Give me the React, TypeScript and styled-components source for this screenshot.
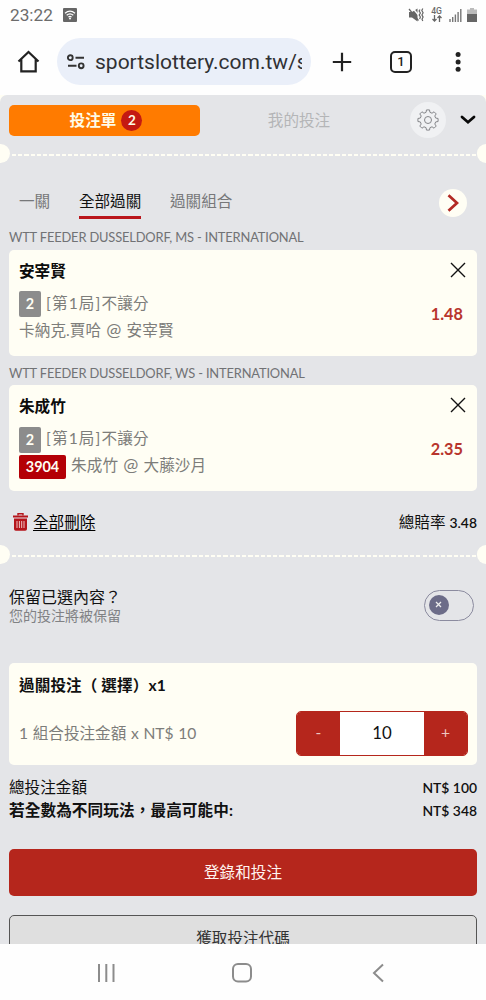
import React from 'react';
import styled, { createGlobalStyle } from 'styled-components';

const RED = '#b5261c';
const CREAM = '#fffef4';

const Global = createGlobalStyle`
  * { box-sizing: border-box; }
  body { margin: 0; background: #fefefe; }
  button { font: inherit; border: 0; padding: 0; background: none; }
`;

const Phone = styled.div`
  width: 486px;
  height: 1000px;
  display: flex;
  flex-direction: column;
  overflow: hidden;
  background: #fefefe;
  font-family: Lato, 'Noto Sans CJK TC', sans-serif;
  font-size: 15.6px;
  color: #111;
  white-space: nowrap;
`;

const StatusBar = styled.header`
  height: 30px;
  flex: none;
  display: flex;
  align-items: center;
  padding: 0 9px 0 10px;
  font: 17.2px/30px Roboto, sans-serif;
  color: #6c6c6c;
`;

const Clock = styled.span`
  width: 53px;
`;

const StatusIcons = styled.div`
  margin-left: auto;
  display: flex;
  align-items: center;
`;

const Network = styled.div`
  width: 13px;
  margin: 0 6px 0 6px;
  display: flex;
  flex-direction: column;
  align-items: center;
  font: 500 8.6px/7px Roboto, sans-serif;
`;

const BatteryIcon = styled.svg`
  margin-left: 5px;
`;

const BrowserBar = styled.div`
  height: 65px;
  flex: none;
  display: flex;
  align-items: center;
  padding: 0 0 2px 17px;
`;

const AddressBar = styled.div`
  width: 254px;
  height: 47px;
  margin: 0 21px 0 17px;
  padding: 0 9px 0 9px;
  border-radius: 24px;
  background: #eaeff9;
  display: flex;
  align-items: center;
`;

const Url = styled.span`
  margin-left: 9px;
  width: 207px;
  overflow: hidden;
  font: 21px/30px Roboto, sans-serif;
  color: #303134;
`;

const TabCount = styled.div`
  width: 22px;
  height: 22px;
  margin: 0 36px 0 38px;
  border: 2px solid #222;
  border-radius: 5px;
  display: flex;
  align-items: center;
  justify-content: center;
  font: 500 13px/18px Roboto, sans-serif;
  color: #222;
`;

const Backdrop = styled.main`
  height: 849px;
  flex: none;
  background: ${CREAM};
`;

const Sheet = styled.div`
  height: 849px;
  overflow: hidden;
  border-radius: 7px 7px 0 0;
  background: #e4e5e8;
`;

const SlipHeader = styled.div`
  height: 49px;
  display: flex;
  align-items: center;
  padding: 1px 9px 0;
`;

const SlipTab = styled.button<{ $active?: boolean }>`
  width: ${p => (p.$active ? 191 : 198)}px;
  height: 31px;
  padding: ${p => (p.$active ? '0 0 2px 3px' : '0 0 3px')};
  border-radius: 5px;
  display: flex;
  align-items: center;
  justify-content: center;
  gap: 5px;
  background: ${p => (p.$active ? '#ff7b00' : 'transparent')};
  color: ${p => (p.$active ? '#fffbe8' : '#b4b5b7')};
  font-weight: ${p => (p.$active ? 700 : 400)};
`;

const Count = styled.span`
  width: 21px;
  height: 21px;
  margin-top: 2px;
  border-radius: 50%;
  background: #c41a12;
  font-size: 13.5px;
  line-height: 21px;
  text-align: center;
`;

const RoundButton = styled.button<{ $size: number; $bg: string }>`
  width: ${p => p.$size}px;
  height: ${p => p.$size}px;
  flex: none;
  border-radius: 50%;
  background: ${p => p.$bg};
  display: flex;
  align-items: center;
  justify-content: center;
`;

const HeaderActions = styled.div`
  display: flex;
  align-items: center;
  gap: 14px;
  margin-left: 12px;
`;

const Perforation = styled.div`
  height: 19px;
  display: flex;
  align-items: center;
  justify-content: space-between;
`;

const Notch = styled.span<{ $right?: boolean }>`
  width: 9.5px;
  height: 19px;
  background: ${CREAM};
  border-radius: ${p => (p.$right ? '10px 0 0 10px' : '0 10px 10px 0')};
`;

const Dashes = styled.span`
  flex: 1;
  height: 2px;
  margin: 2px 0 0 2px;
  background: repeating-linear-gradient(90deg, ${CREAM} 0 4.2px, transparent 4.2px 6.22px);
`;

const ComboBar = styled.nav`
  height: 63px;
  display: flex;
  align-items: flex-end;
  padding: 0 19px 7px;
  gap: 28.7px;
`;

const ComboTab = styled.button<{ $active?: boolean }>`
  height: 33px;
  padding-top: 1px;
  line-height: 29px;
  border-bottom: 3px solid ${p => (p.$active ? '#b9151b' : 'transparent')};
  color: ${p => (p.$active ? '#111' : '#77787a')};
`;

const NextSlot = styled.div`
  margin: 0 0 2px auto;
`;

const League = styled.div<{ $top: number }>`
  height: ${p => p.$top + 23.5}px;
  padding: ${p => p.$top}px 9px 0;
  font-size: 12.9px;
  line-height: 22px;
  letter-spacing: -0.17px;
  color: #717275;
`;

const Card = styled.section<{ $height: number }>`
  height: ${p => p.$height}px;
  margin: 0 9px;
  border-radius: 5px;
  background: ${CREAM};
  padding: 0 10px;
`;

const PickTop = styled.div`
  height: 41px;
  padding-bottom: 1px;
  display: flex;
  align-items: center;
  justify-content: space-between;
  font-weight: 700;
  color: #0b0b0b;
`;

const PickBody = styled.div`
  display: flex;
  justify-content: space-between;
  color: #7d7d7a;
  padding-right: 4px;
`;

const PickLine = styled.div`
  height: 27px;
  display: flex;
  align-items: center;
  gap: 5px;
`;

const Period = styled.span`
  letter-spacing: 1.15px;
`;

const Label = styled.span`
  padding-bottom: 3px;
  line-height: 22px;
  word-spacing: 1px;
  letter-spacing: 0.1px;
`;

const At = styled.span`
  font-size: 18px;
  line-height: 1;
`;

const Tag = styled.span<{ $code?: boolean }>`
  width: ${p => (p.$code ? 47 : 22)}px;
  height: ${p => (p.$code ? 24 : 26)}px;
  line-height: ${p => (p.$code ? 24 : 26)}px;
  border-radius: 2px;
  background: ${p => (p.$code ? '#b40006' : '#8c8c8c')};
  color: #fffef4;
  font-size: 14.4px;
  font-weight: 700;
  text-align: center;
`;

const Odds = styled.span`
  margin-top: 13px;
  line-height: 20px;
  font-size: 16.3px;
  font-weight: 700;
  color: #b8352c;
`;

const SplitRow = styled.div<{ $h: number; $top?: number }>`
  height: ${p => p.$h}px;
  padding: ${p => p.$top ?? 0}px 9px 0;
  display: flex;
  align-items: center;
  justify-content: space-between;
  line-height: 23px;
`;

const ClearAll = styled.button`
  display: flex;
  align-items: center;
  gap: 5px;
  padding-left: 4px;
`;

const ClearText = styled.span`
  line-height: 20px;
  text-decoration: underline;
  text-underline-offset: 2px;
  text-decoration-thickness: 1px;
`;

const Strong = styled.span`
  font-weight: 600;
  font-size: 13.9px;
`;

const MaxWin = styled.b`
  letter-spacing: 0.12px;
`;

const KeepRow = styled.div`
  height: 98.5px;
  padding: 22px 12px 0 9px;
  display: flex;
  justify-content: space-between;
`;

const KeepTitle = styled.div`
  line-height: 21px;
  font-size: 16px;
`;

const KeepHint = styled.div`
  line-height: 17px;
  font-size: 14px;
  color: #808184;
`;

const Toggle = styled.span`
  width: 50px;
  height: 31px;
  margin-top: 3.5px;
  border: 1px solid #8b8b9f;
  border-radius: 16px;
  padding: 4px 3.5px;
`;

const Knob = styled.span`
  width: 20px;
  height: 20px;
  border-radius: 50%;
  background: #6c6c88;
  display: flex;
  align-items: center;
  justify-content: center;
`;

const StakeTitle = styled.div`
  height: 48px;
  line-height: 45px;
  font-weight: 700;
  letter-spacing: 0.1px;
`;

const StakeRow = styled.div`
  height: 45px;
  display: flex;
  align-items: center;
  justify-content: space-between;
  color: #7d7d7a;
`;

const StakeText = styled.span`
  padding-bottom: 2px;
  word-spacing: 0.7px;
`;

const Stepper = styled.div`
  width: 172px;
  height: 45px;
  margin-right: -1px;
  border: 1px solid ${RED};
  border-radius: 5px;
  overflow: hidden;
  display: flex;
`;

const StepButton = styled.button`
  width: 43px;
  padding-bottom: 2px;
  background: ${RED};
  color: #eec6c0;
`;

const StepValue = styled.span`
  flex: 1;
  background: #fff;
  color: #111;
  line-height: 42px;
  font-size: 16.8px;
  text-align: center;
`;

const Totals = styled.div`
  padding-top: 11px;
  height: 84px;
`;

const Submit = styled.button`
  display: block;
  width: 468px;
  height: 47px;
  margin: 0 9px 19px;
  padding-bottom: 3px;
  border-radius: 5px;
  background: ${RED};
  color: #fff4f0;
`;

const CodeButton = styled.button`
  display: block;
  width: 468px;
  height: 48px;
  margin: 0 9px;
  padding-bottom: 4px;
  border: 1px solid #555;
  border-radius: 5px;
  background: #dfdfdf;
  color: #333;
`;

const SystemNav = styled.footer`
  height: 56px;
  flex: none;
  display: flex;
  align-items: center;
  padding: 2px 0 0 97px;
`;

const NavIcon = styled.svg<{ $gap: number }>`
  margin-right: ${p => p.$gap}px;
  fill: none;
  stroke: #8c8c8c;
  stroke-width: 2;
`;

const WifiIcon = () => (
  <svg width="14" height="14" viewBox="0 0 14 14">
    <rect width="14" height="14" rx="1" fill="#666" />
    <g fill="none" stroke="#fff" strokeWidth="1.2">
      <path d="M2 5.3Q7 1.1 12 5.3M3.7 7.3Q7 4.5 10.3 7.3M5.4 9.1Q7 7.8 8.6 9.1" />
    </g>
    <circle cx="7" cy="10.6" r="1" fill="#fff" />
  </svg>
);

const MuteIcon = () => (
  <svg width="16" height="14" viewBox="0 0 16 14">
    <path d="M1 4h3L9.5 .5v13L4 9.5H1z" fill="#666" />
    <path d="M4.6 0L10.5 7" stroke="#fefefe" strokeWidth="1.4" />
    <path d="M1 1L10.5 12.5" stroke="#666" strokeWidth="1.2" />
    <path d="M12 1.5L11.1 3l1.3 2-1.2 2 1.2 2-.8 2M14.8.5l-1 2 1.300 2.200-1.200 2.200 1.200 2.200-1.100 2.200.8 1.700" fill="none" stroke="#666" strokeWidth="1.2" />
  </svg>
);

const TrashIcon = () => (
  <svg width="15" height="18" viewBox="0 0 15 18">
    <path d="M5 2.5V.8h5v1.7" fill="none" stroke="#b5151b" strokeWidth="1.4" />
    <path d="M0 2.4h15v2.2H0zM1 5.6h13V16q0 1.8-1.8 1.8H2.8Q1 17.8 1 16z" fill="#b5151b" />
    <path d="M4 8v7M6.4 8v7M8.7 8v7M11 8v7" stroke="#f3d6d5" strokeWidth=".9" />
  </svg>
);

const gearPath = (() => {
  const pts: string[] = [];
  for (let i = 0; i < 8; i++) {
    const base = (i * Math.PI) / 4;
    for (const [offset, r] of [[-0.25, 7.9], [-0.15, 10.2], [0.15, 10.2], [0.25, 7.9]]) {
      pts.push(`${(11 + r * Math.sin(base + offset)).toFixed(2)} ${(11 - r * Math.cos(base + offset)).toFixed(2)}`);
    }
  }
  return `M${pts.join('L')}Z`;
})();

const GearIcon = () => (
  <svg width="22" height="22" viewBox="0 0 22 22" fill="none" stroke="#85868a" strokeWidth="1" strokeLinejoin="round">
    <path d={gearPath} />
    <circle cx="11" cy="11" r="3.5" />
  </svg>
);

type Pick = {
  league: string;
  name: string;
  odds: string;
  home: string;
  away: string;
  code?: string;
  top: number;
};

const picks: Pick[] = [
  { league: 'WTT FEEDER DUSSELDORF, MS - INTERNATIONAL', name: '安宰賢', odds: '1.48', home: '卡納克.賈哈', away: '安宰賢', top: 0 },
  { league: 'WTT FEEDER DUSSELDORF, WS - INTERNATIONAL', name: '朱成竹', odds: '2.35', home: '朱成竹', away: '大藤沙月', code: '3904', top: 6 },
];

const PickEntry = ({ pick }: { pick: Pick }) => (
  <>
    <League $top={pick.top}>{pick.league}</League>
    <Card $height={106}>
      <PickTop>
        <span>{pick.name}</span>
        <svg width="17" height="16" viewBox="0 0 17 16">
          <path d="M1 1l14 14M15 1L1 15" stroke="#111" strokeWidth="1.4" />
        </svg>
      </PickTop>
      <PickBody>
        <div>
          <PickLine><Tag>2</Tag><Label><Period>[第1局]</Period>不讓分</Label></PickLine>
          <PickLine>
            {pick.code && <Tag $code>{pick.code}</Tag>}
            <Label>{pick.home} <At>@</At> {pick.away}</Label>
          </PickLine>
        </div>
        <Odds>{pick.odds}</Odds>
      </PickBody>
    </Card>
  </>
);

const TicketEdge = () => (
  <Perforation><Notch /><Dashes /><Notch $right /></Perforation>
);

export default function App() {
  return (
    <Phone>
      <Global />
      <StatusBar>
        <Clock>23:22</Clock>
        <WifiIcon />
        <StatusIcons>
          <MuteIcon />
          <Network>
            <span>4G</span>
            <svg width="10" height="7" viewBox="0 0 10 7">
              <path d="M2.5 0v6M.5 4l2 2 2-2M7.5 7V1M5.5 3l2-2 2 2" fill="none" stroke="#666" strokeWidth="1.3" />
            </svg>
          </Network>
          <svg width="13" height="13" viewBox="0 0 13 13">
            <path d="M1 10v3M3.7 8v5M6.4 5.5V13M9.1 3v10M11.8 0v13" stroke="#777" strokeWidth="1.4" />
          </svg>
          <BatteryIcon width="10" height="14" viewBox="0 0 10 14">
            <path d="M3 0h4v1.5h3V6H0V1.5h3z" fill="#bbb" />
            <path d="M0 6h10v8H0z" fill="#666" />
          </BatteryIcon>
        </StatusIcons>
      </StatusBar>
      <BrowserBar>
        <svg width="23" height="23" viewBox="0 0 23 23">
          <path d="M1.5 11.5L11.5 2l10 9.5M4.3 9.5v11.8h14.4V9.5" fill="none" stroke="#222" strokeWidth="2.2" />
        </svg>
        <AddressBar>
          <svg width="20" height="16" viewBox="0 0 20 16" fill="none" stroke="#333" strokeWidth="1.9">
            <circle cx="4.3" cy="3.7" r="2.4" />
            <path d="M9.5 3.7H18M2 11.8h8.5" />
            <circle cx="15.2" cy="11.8" r="2.4" />
          </svg>
          <Url>sportslottery.com.tw/s</Url>
        </AddressBar>
        <svg width="20" height="20" viewBox="0 0 20 20">
          <path d="M10 .8v18.4M.8 10h18.4" stroke="#222" strokeWidth="2.2" />
        </svg>
        <TabCount>1</TabCount>
        <svg width="24" height="20" viewBox="0 0 24 20" fill="#222">
          <circle cx="10.1" cy="2.5" r="2.5" /><circle cx="10.1" cy="10" r="2.5" /><circle cx="10.1" cy="17.3" r="2.5" />
        </svg>
      </BrowserBar>
      <Backdrop>
        <Sheet>
          <SlipHeader>
            <SlipTab $active>投注單<Count>2</Count></SlipTab>
            <SlipTab>我的投注</SlipTab>
            <HeaderActions>
              <RoundButton $size={36} $bg="#f0f1f3"><GearIcon /></RoundButton>
              <svg width="16" height="10" viewBox="0 0 16 10">
                <path d="M2 2l6 5.2L14 2" fill="none" stroke="#080808" strokeWidth="2.8" strokeLinecap="round" />
              </svg>
            </HeaderActions>
          </SlipHeader>
          <TicketEdge />
          <ComboBar>
            <ComboTab>一關</ComboTab>
            <ComboTab $active>全部過關</ComboTab>
            <ComboTab>過關組合</ComboTab>
            <NextSlot>
              <RoundButton $size={28} $bg={CREAM}>
                <svg width="12" height="18" viewBox="0 0 12 18">
                  <path d="M1.5 1.2L10 9l-8.5 7.8" fill="none" stroke="#b32a24" strokeWidth="2.8" />
                </svg>
              </RoundButton>
            </NextSlot>
          </ComboBar>
          {picks.map(pick => <PickEntry key={pick.name} pick={pick} />)}
          <SplitRow $h={54} $top={8}>
            <ClearAll><TrashIcon /><ClearText>全部刪除</ClearText></ClearAll>
            <span>總賠率 <Strong>3.48</Strong></span>
          </SplitRow>
          <TicketEdge />
          <KeepRow>
            <div>
              <KeepTitle>保留已選內容？</KeepTitle>
              <KeepHint>您的投注將被保留</KeepHint>
            </div>
            <Toggle>
              <Knob>
                <svg width="7" height="7" viewBox="0 0 7 7"><path d="M1 1l5 5M6 1L1 6" stroke="#eee" strokeWidth="1.3" /></svg>
              </Knob>
            </Toggle>
          </KeepRow>
          <Card $height={102}>
            <StakeTitle>過關投注（ 選擇）x1</StakeTitle>
            <StakeRow>
              <StakeText>1 組合投注金額 x NT$ 10</StakeText>
              <Stepper>
                <StepButton>-</StepButton>
                <StepValue>10</StepValue>
                <StepButton>+</StepButton>
              </Stepper>
            </StakeRow>
          </Card>
          <Totals>
            <SplitRow $h={23}><span>總投注金額</span><Strong>NT$ 100</Strong></SplitRow>
            <SplitRow $h={23}><MaxWin>若全數為不同玩法，最高可能中:</MaxWin><Strong>NT$ 348</Strong></SplitRow>
          </Totals>
          <Submit>登錄和投注</Submit>
          <CodeButton>獲取投注代碼</CodeButton>
        </Sheet>
      </Backdrop>
      <SystemNav>
        <NavIcon $gap={116} width="19" height="20" viewBox="0 0 19 20"><path d="M2 1v18M9.3 1v18M16.5 1v18" /></NavIcon>
        <NavIcon $gap={120} width="20" height="20" viewBox="0 0 20 20"><rect x="1" y="1" width="18" height="17.5" rx="5" /></NavIcon>
        <NavIcon $gap={0} width="12" height="20" viewBox="0 0 12 20"><path d="M11 1.5L2 10l9 8.5" /></NavIcon>
      </SystemNav>
    </Phone>
  );
}
